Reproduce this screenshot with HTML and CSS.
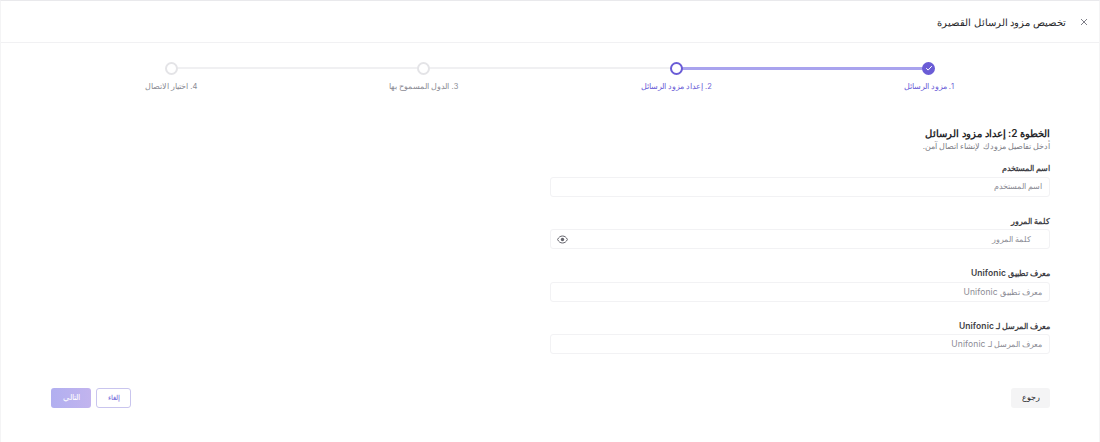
FILE: index.html
```html
<!DOCTYPE html>
<html lang="ar" dir="rtl">
  <head>
    <meta charset="utf-8">
    <title>تخصيص مزود الرسائل القصيرة</title>

    <link rel="stylesheet" href="styles.css">
  </head>

  <body>
    <div id="dialog">
      <header class="dialogHeader">
        <button class="closeButton" aria-label="close">
          <svg width="8" height="8" viewBox="0 0 8 8">
            <path d="M1 1l6 6M7 1l-6 6" stroke="#71717a" stroke-width="0.9" fill="none"/>
          </svg>
        </button>
        <h1 class="dialogTitle">تخصيص مزود الرسائل القصيرة</h1>
      </header>

      <ol class="stepper">
        <li class="step done">
          <span class="stepDot">
            <svg width="8" height="8" viewBox="0 0 8 8">
              <path d="M1.2 4.2l1.9 1.9 3.7-4" stroke="#fff" stroke-width="1" fill="none"/>
            </svg>
          </span>
          <span class="stepLabel">1. مزود الرسائل</span>
        </li>
        <li class="step current">
          <span class="stepDot"></span>
          <span class="stepLabel">2. إعداد مزود الرسائل</span>
        </li>
        <li class="step">
          <span class="stepDot"></span>
          <span class="stepLabel">3. الدول المسموح بها</span>
        </li>
        <li class="step">
          <span class="stepDot"></span>
          <span class="stepLabel">4. اختيار الاتصال</span>
        </li>
      </ol>

      <form class="form">
        <h2 class="formTitle">الخطوة 2: إعداد مزود الرسائل</h2>
        <p class="formHint">أدخل تفاصيل مزودك لإنشاء اتصال آمن.</p>

        <div class="field">
          <label class="fieldLabel">اسم المستخدم</label>
          <div class="inputBox"><span class="placeholder">اسم المستخدم</span></div>
        </div>

        <div class="field">
          <label class="fieldLabel">كلمة المرور</label>
          <div class="inputBox passwordBox">
            <span class="placeholder">كلمة المرور</span>
            <svg class="eye" width="11" height="9" viewBox="0 0 11 9">
              <path d="M0.6 4.5C1.6 2.3 3.3 1 5.5 1s3.9 1.3 4.9 3.5C9.4 6.7 7.7 8 5.5 8S1.6 6.7 0.6 4.5z" fill="none" stroke="#63636b" stroke-width="1"/>
              <circle cx="5.5" cy="4.5" r="1.7" fill="#63636b"/>
            </svg>
          </div>
        </div>

        <div class="field">
          <label class="fieldLabel">معرف تطبيق <span class="latin">Unifonic</span></label>
          <div class="inputBox"><span class="placeholder">معرف تطبيق <span class="latin">Unifonic</span></span></div>
        </div>

        <div class="field">
          <label class="fieldLabel">معرف المرسل لـ <span class="latin">Unifonic</span></label>
          <div class="inputBox"><span class="placeholder">معرف المرسل لـ <span class="latin">Unifonic</span></span></div>
        </div>
      </form>

      <footer class="actions">
        <button class="btn btnBack">رجوع</button>
        <div class="actionGroup">
          <button class="btn btnCancel">إلغاء</button>
          <button class="btn btnNext">التالي</button>
        </div>
      </footer>
    </div>
  </body>
</html>
```

FILE: styles.css
```css
body {
  margin: 0;
  padding: 0;
  background: #fff;
  font-family: Inter, sans-serif;
  color: #18181b;
}

#dialog {
  width: 1100px;
  height: 442px;
  box-sizing: border-box;
  border-top: 1px solid #e9e9ec;
  border-right: 1px solid #f4f4f5;
  border-left: 1px solid #f4f4f5;
  overflow: hidden;
}

.dialogHeader {
  height: 42px;
  box-sizing: border-box;
  padding: 0 10px;
  border-bottom: 1px solid #f1f1f3;

  display: flex;
  align-items: center;
  gap: 13px;
}

.dialogTitle {
  margin: 0;
  font-size: 10px;
  font-weight: 500;
  color: #27272a;
}

.closeButton {
  width: 10px;
  height: 10px;
  padding: 0;
  border: 0;
  background: none;

  display: flex;
  align-items: center;
  justify-content: center;
}

/* stepper */
.stepper {
  list-style: none;
  margin: 0;
  padding: 18.5px 44px 0;
  height: 64.5px;
  box-sizing: content-box;

  display: grid;
  grid-template-columns: repeat(4, 252.5px);
}

.step {
  position: relative;

  display: flex;
  flex-direction: column;
  align-items: center;
}

.step::after {
  content: "";
  position: absolute;
  top: 5.5px;
  right: 50%;
  width: 100%;
  height: 2px;
  background: #f0f0f2;
}

.step:last-child::after {
  display: none;
}

.step.done::after {
  top: 5px;
  height: 3px;
  background: #a9a3ee;
}

.stepDot {
  position: relative;
  z-index: 1;
  width: 13px;
  height: 13px;
  box-sizing: border-box;
  border: 2px solid #e4e4e7;
  border-radius: 50%;
  background: #fff;

  display: flex;
  align-items: center;
  justify-content: center;
}

.step.done .stepDot {
  border: 0;
  background: #6a5cd6;
}

.step.current .stepDot {
  border: 2.5px solid #6a5cd6;
}

.stepLabel {
  margin-top: 6.5px;
  font-size: 7.5px;
  line-height: 12px;
  color: #8b8b94;
  white-space: nowrap;
}

.step.done .stepLabel,
.step.current .stepLabel {
  color: #6a5cd6;
}

/* form */
.form {
  width: 500px;
  margin-right: 49px;
}

.formTitle {
  margin: 0;
  font-size: 10px;
  line-height: 14px;
  font-weight: 600;
  color: #27272a;
}

.formHint {
  margin: 0 0 10px;
  font-size: 7.8px;
  line-height: 12px;
  color: #7c7c85;
}

.field {
  height: 52.5px;
}

.fieldLabel {
  display: block;
  height: 14.5px;
  font-size: 7.9px;
  line-height: 12px;
  font-weight: 600;
  color: #3f3f46;
}

.inputBox {
  height: 20px;
  box-sizing: border-box;
  padding: 0 7px;
  border: 1px solid #f2f2f4;
  border-radius: 3px;

  display: flex;
  align-items: center;
  justify-content: space-between;
}

.passwordBox {
  padding: 0 18px 0 6px;
}

.placeholder {
  font-size: 7.7px;
  color: #8b8b94;
}

.latin {
  font-size: 8.5px;
  letter-spacing: 0.1px;
}

.eye {
  display: block;
}

/* footer */
.actions {
  margin: 15.5px 49px 0 50px;

  display: flex;
  justify-content: space-between;
}

.actionGroup {
  display: flex;
  gap: 5px;
}

.btn {
  height: 20px;
  padding: 0;
  border: 0;
  border-radius: 3px;
  font-family: inherit;
  font-size: 7.5px;
}

.btnBack {
  width: 39px;
  background: #f4f4f5;
  color: #27272a;
}

.btnCancel {
  width: 35px;
  border: 1px solid #c9c5ee;
  background: #fff;
  color: #6a5cd6;
  font-size: 7px;
}

.btnNext {
  width: 40px;
  background: linear-gradient(90deg, #b1aff0, #c2b4ee);
  color: #fff;
}
```
